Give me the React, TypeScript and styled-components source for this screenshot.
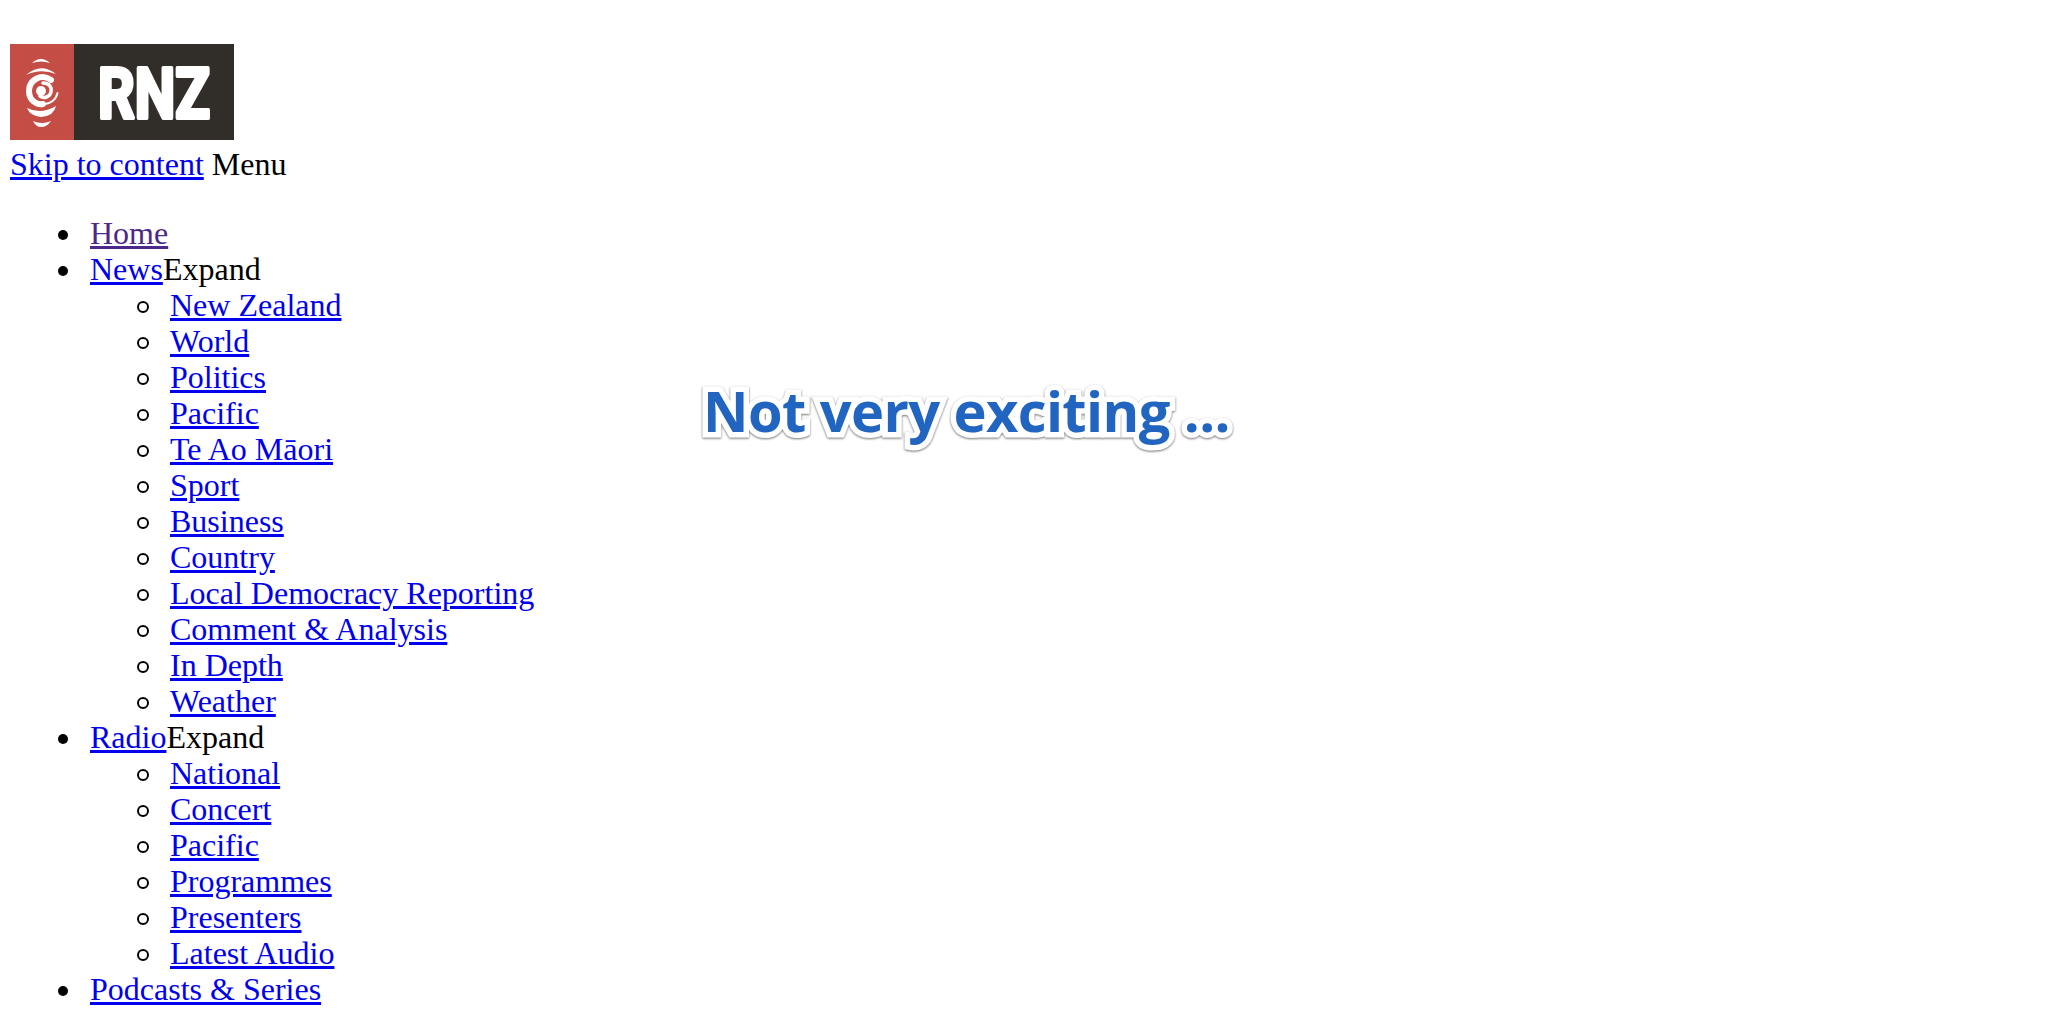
import React from "react";
import styled, { createGlobalStyle } from "styled-components";

const GlobalStyle = createGlobalStyle`
  html, body {
    margin: 0;
    padding: 0;
    height: 1012px;
    overflow: hidden;
    background: #fff;
    color: #000;
    font-family: "Liberation Serif", "Times New Roman", serif;
    font-size: 32px;
  }
`;

const newsLinks = [
  "New Zealand",
  "World",
  "Politics",
  "Pacific",
  "Te Ao Māori",
  "Sport",
  "Business",
  "Country",
  "Local Democracy Reporting",
  "Comment & Analysis",
  "In Depth",
  "Weather",
];

const radioLinks = ["National", "Concert", "Pacific", "Programmes", "Presenters", "Latest Audio"];

const RnzLogo = () => (
  <LogoSvg viewBox="0 0 224 96" xmlns="http://www.w3.org/2000/svg" role="img" aria-label="RNZ">
    <rect width="64" height="96" fill="#c44d45" />
    <rect x="64" width="160" height="96" fill="#312d29" />
    <g fill="#fff">
      <path d="M22 19Q31 11 40 19Q31 16 22 19Z" />
      <path d="M16 31Q31 18 46 30Q31 24 16 31Z" />
      <path d="M17 64Q31 71 46 62Q44 72 31 73Q20 72 17 64Z" />
      <path d="M23 77Q32 81 41 77Q37 83 31 83Q26 83 23 77Z" />
    </g>
    <g fill="none" stroke="#fff" strokeLinecap="round">
      <path d="M41 36C31 29 19 36 19 47C19 56 26 61 33 60" strokeWidth="6" />
      <path d="M33 60.500C40 60 46 56 47.500 49" strokeWidth="2" />
      <path d="M33 39C39 39 42 43 41 48C40 53 34 55 30 52" strokeWidth="3.500" />
    </g>
    <circle cx="31" cy="47" r="5" fill="#fff" />
    <LogoText x="88" y="74" textLength="112" lengthAdjust="spacingAndGlyphs">RNZ</LogoText>
  </LogoSvg>
);

const App: React.FC = () => (
  <Page>
    <GlobalStyle />
    <LogoRow>
      <RnzLogo />
    </LogoRow>
    <TopLine>
      <NavLink href="#content">Skip to content</NavLink> <span>Menu</span>
    </TopLine>
    <MainList>
      <li>
        <NavLink href="#home" $visited>Home</NavLink>
      </li>
      <li>
        <NavLink href="#news">News</NavLink>Expand
        <SubList>
          {newsLinks.map((name) => (
            <li key={name}>
              <NavLink href="#news">{name}</NavLink>
            </li>
          ))}
        </SubList>
      </li>
      <li>
        <NavLink href="#radio">Radio</NavLink>Expand
        <SubList>
          {radioLinks.map((name) => (
            <li key={name}>
              <NavLink href="#radio">{name}</NavLink>
            </li>
          ))}
        </SubList>
      </li>
      <li>
        <NavLink href="#podcasts">Podcasts &amp; Series</NavLink>
      </li>
    </MainList>
    <Notice>Not very exciting ...</Notice>
  </Page>
);

const Page = styled.div`
  position: relative;
  padding: 44px 10px 0;
  line-height: 36px;
`;

const LogoRow = styled.div`
  display: flex;
  height: 96px;
`;

const LogoSvg = styled.svg`
  display: block;
  width: 224px;
  height: 96px;
`;

const LogoText = styled.text`
  font-family: "Roboto", "Liberation Sans", sans-serif;
  font-weight: 700;
  font-size: 70px;
  fill: #fff;
  stroke: #fff;
  stroke-width: 4px;
  stroke-linejoin: round;
`;

const TopLine = styled.div`
  height: 36px;
  margin-top: 6px;
`;

const MainList = styled.ul`
  list-style: none;
  margin: 33px 0 0;
  padding-left: 80px;

  > li {
    position: relative;
  }

  > li::before {
    content: "";
    position: absolute;
    left: -32px;
    top: 15px;
    width: 10px;
    height: 10px;
    border-radius: 50%;
    background: #000;
  }
`;

const SubList = styled.ul`
  list-style: none;
  margin: 0;
  padding-left: 80px;

  > li {
    position: relative;
  }

  > li::before {
    content: "";
    position: absolute;
    left: -33px;
    top: 14px;
    width: 8px;
    height: 8px;
    border: 2px solid #000;
    border-radius: 50%;
  }
`;

const NavLink = styled.a<{ $visited?: boolean }>`
  color: ${({ $visited }) => ($visited ? "#4c2889" : "#0000ee")};
  text-decoration: underline;
`;

const Notice = styled.h1`
  position: absolute;
  top: 374px;
  left: 703px;
  margin: 0;
  font-family: "Open Sans", sans-serif;
  font-size: 56px;
  font-weight: 700;
  letter-spacing: -0.6px;
  line-height: 72px;
  white-space: nowrap;
  color: #2265c1;
  -webkit-text-stroke: 11px #fff;
  paint-order: stroke fill;
  filter: drop-shadow(0 1.5px 1px rgba(0, 0, 0, 0.55));
`;

export default App;
